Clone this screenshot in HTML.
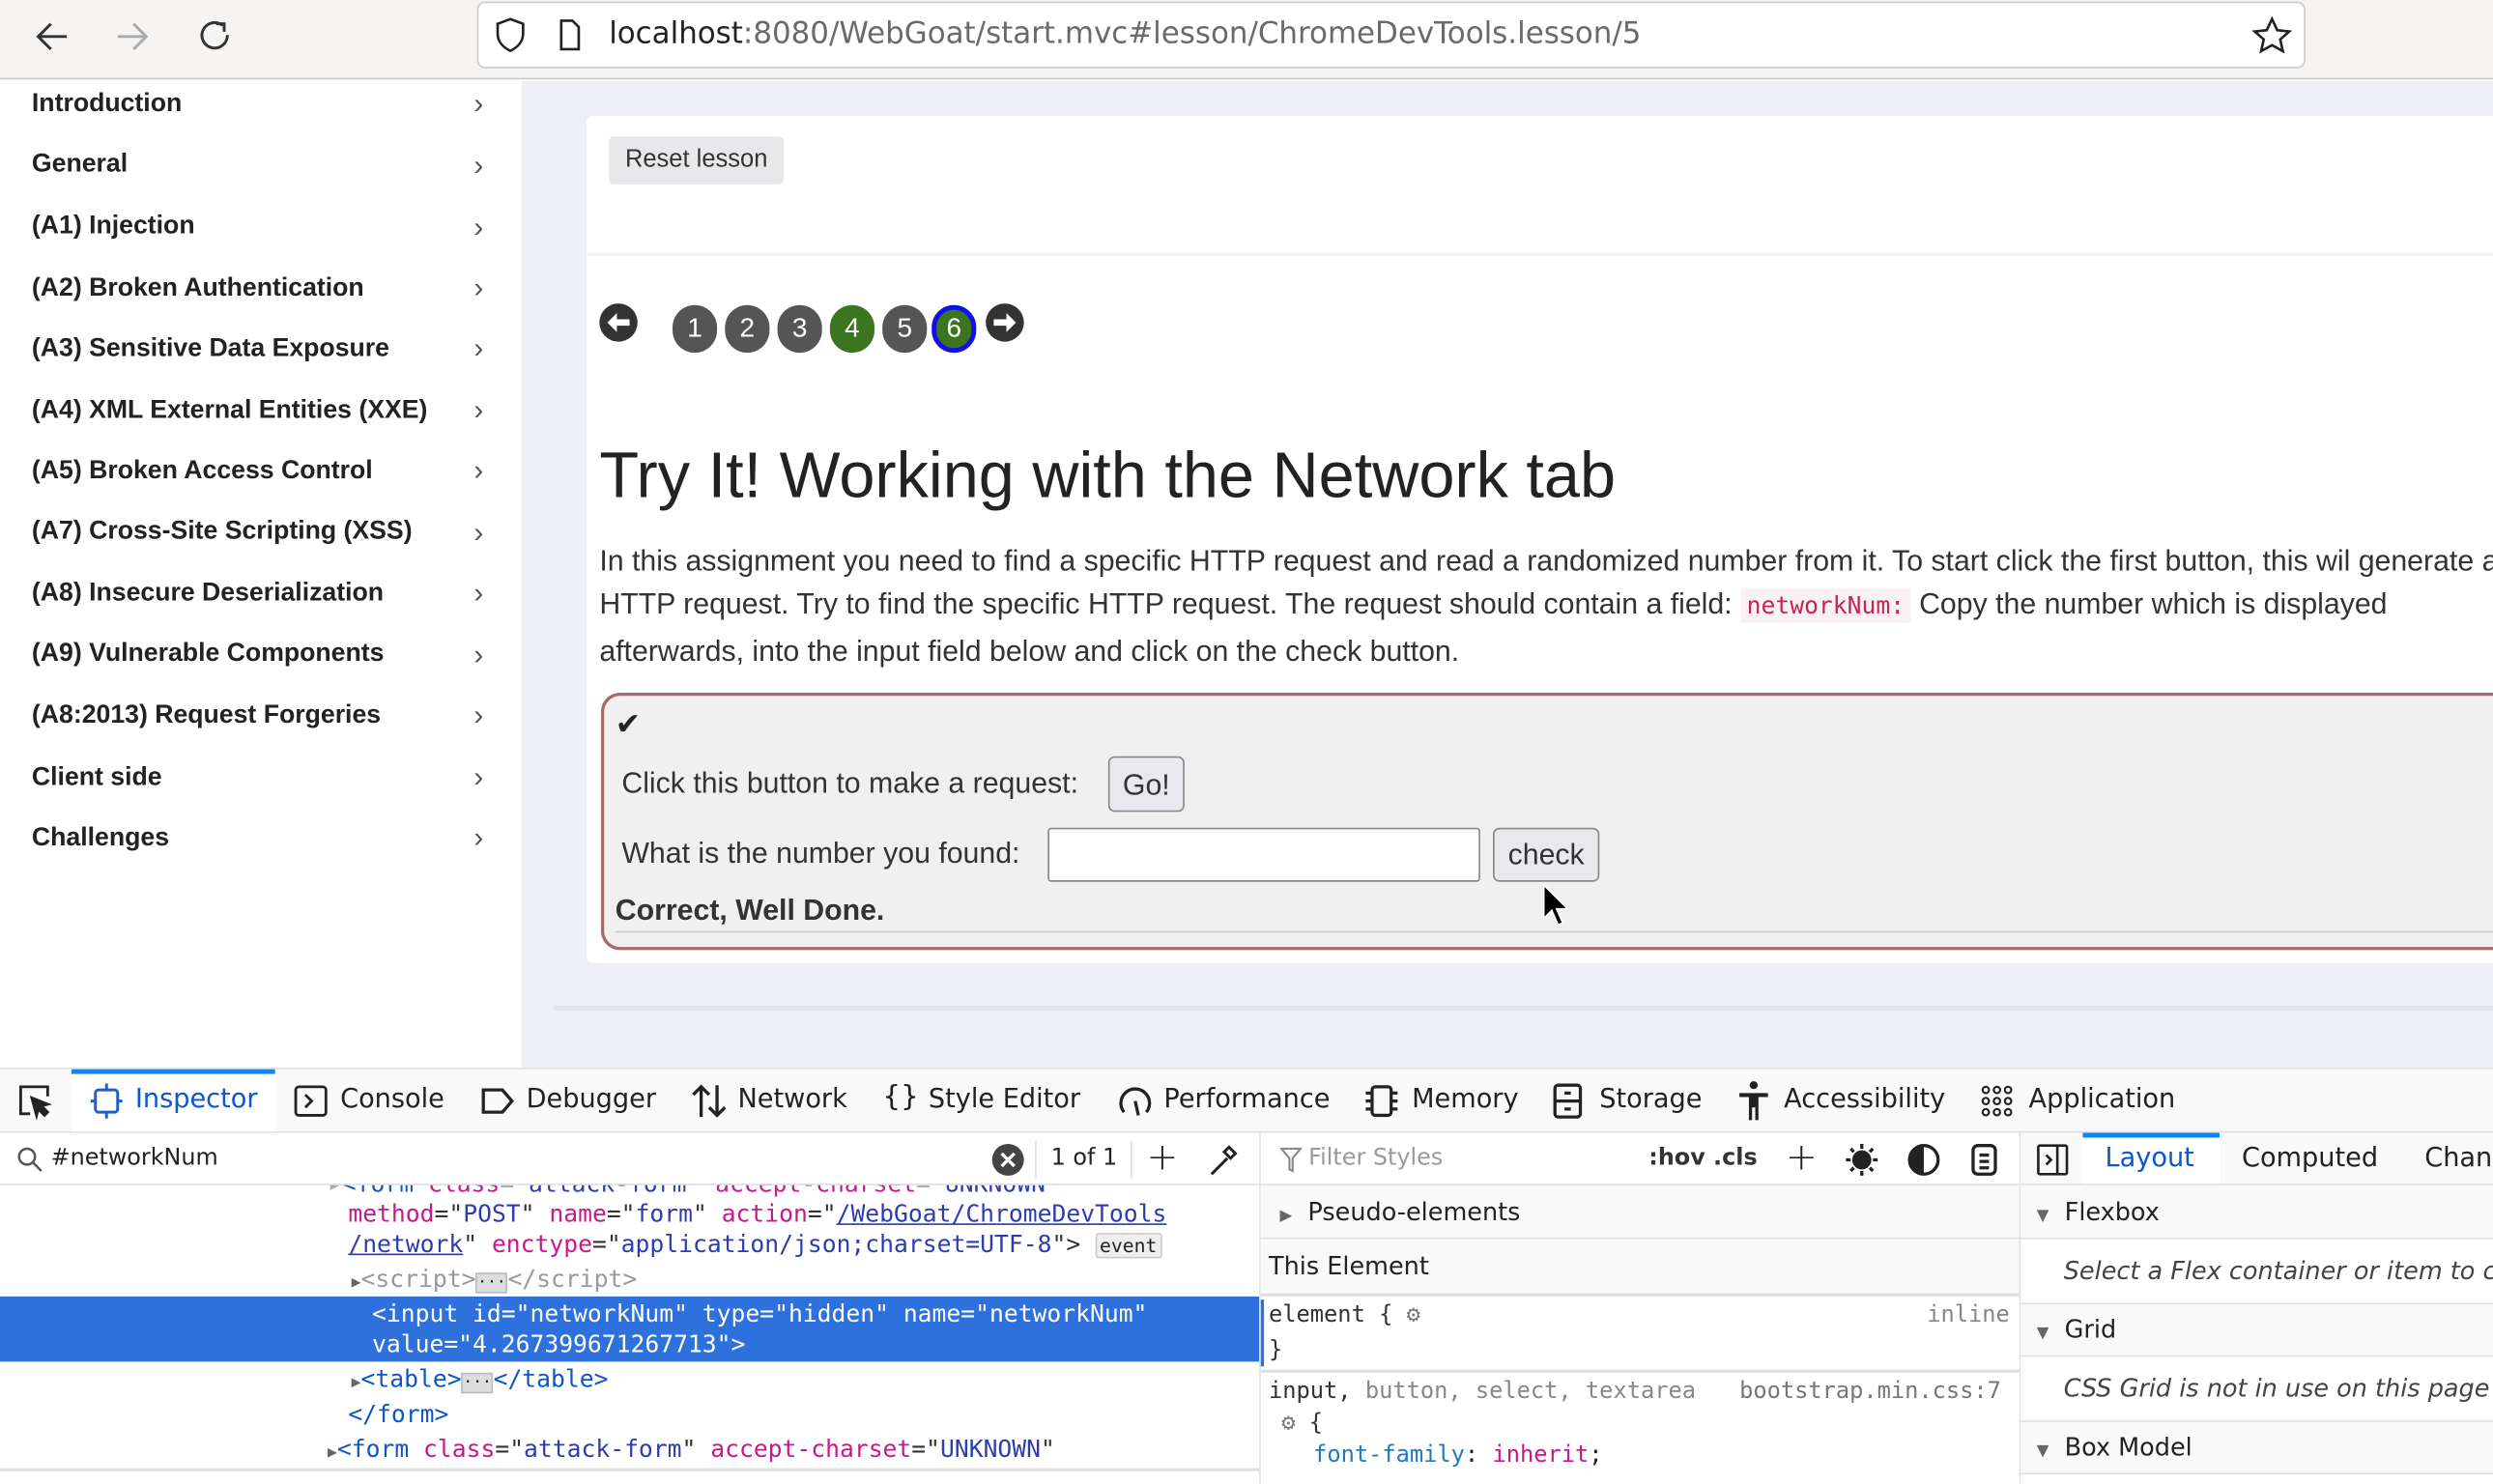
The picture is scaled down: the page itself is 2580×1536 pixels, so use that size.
<!DOCTYPE html>
<html><head><meta charset="utf-8"><style>
*{box-sizing:border-box;margin:0;padding:0}
html,body{width:2580px;height:1536px;overflow:hidden;background:#fff}
#s{position:absolute;left:0;top:0;width:1568px;height:934px;transform:scale(1.6454,1.6445);transform-origin:0 0;font-family:"Liberation Sans",sans-serif;color:#222;overflow:hidden}
.a{position:absolute;white-space:nowrap}
.m{font-family:"DejaVu Sans Mono","Liberation Mono",monospace;font-size:15px}
.ms{font-family:"DejaVu Sans Mono","Liberation Mono",monospace;font-size:14.4px}
.d{font-family:"DejaVu Sans","Liberation Sans",sans-serif}
.side div.it{position:absolute;left:20px;font-weight:bold;font-size:16.2px;color:#222}
.side span.ch{position:absolute;left:298px;font-size:18px;color:#555}
.pg{position:absolute;top:192px;width:28px;height:30px;border-radius:14px;background:#555;color:#fff;font-size:17px;text-align:center;line-height:30px}
.tab{position:absolute;top:682px;font-size:16.5px;color:#222}
.tg{color:#0e56c6}.at{color:#c8188f}.vl{color:#2f3cb0}.gr{color:#888}
</style></head><body><div id="s">
<div class="a" style="left:0;top:0;width:1568px;height:50px;background:#f5f4f2;border-bottom:1px solid #cfccc8"></div>
<svg class="a" style="left:20px;top:10px" width="130" height="26" viewBox="0 0 130 26" fill="none" stroke="#333" stroke-width="1.8"><path d="M22 13H5M12 5l-8 8 8 8"/><path d="M54 13h17M64 5l8 8-8 8" stroke="#aaa"/><path d="M120 6a8 8 0 1 0 3 6" /><path d="M116 5h5v5"/></svg>
<div class="a" style="left:300px;top:1px;width:1150px;height:42px;background:#fff;border:1.5px solid #cdcac6;border-radius:5px"></div>
<svg class="a" style="left:310px;top:10px" width="60" height="24" viewBox="0 0 60 24" fill="none" stroke="#222" stroke-width="1.6"><path d="M11 2l8 3v6c0 6-4 9-8 11-4-2-8-5-8-11V5z"/><path d="M43 3h7l4 4v14H43z"/></svg>
<div class="a d" style="left:383px;top:11px;font-size:18.8px;color:#222">localhost<span style="color:#6a6a6a">:8080/WebGoat/start.mvc#lesson/ChromeDevTools.lesson/5</span></div>
<svg class="a" style="left:1416px;top:10px" width="26" height="26" viewBox="0 0 26 26" fill="none" stroke="#222" stroke-width="1.6"><path d="M13 2l3.3 7 7.5.8-5.6 5 1.6 7.4L13 18.4l-6.8 3.8 1.6-7.4-5.6-5L9.7 9z"/></svg>
<div class="a side" style="left:0;top:51px;width:328px;height:621px;background:#fff">
<div class="it" style="top:5px">Introduction</div><span class="ch" style="top:4px">›</span>
<div class="it" style="top:43px">General</div><span class="ch" style="top:43px">›</span>
<div class="it" style="top:82px">(A1) Injection</div><span class="ch" style="top:82px">›</span>
<div class="it" style="top:121px">(A2) Broken Authentication</div><span class="ch" style="top:120px">›</span>
<div class="it" style="top:159px">(A3) Sensitive Data Exposure</div><span class="ch" style="top:158px">›</span>
<div class="it" style="top:198px">(A4) XML External Entities (XXE)</div><span class="ch" style="top:197px">›</span>
<div class="it" style="top:236px">(A5) Broken Access Control</div><span class="ch" style="top:235px">›</span>
<div class="it" style="top:274px">(A7) Cross-Site Scripting (XSS)</div><span class="ch" style="top:274px">›</span>
<div class="it" style="top:313px">(A8) Insecure Deserialization</div><span class="ch" style="top:312px">›</span>
<div class="it" style="top:351px">(A9) Vulnerable Components</div><span class="ch" style="top:351px">›</span>
<div class="it" style="top:390px">(A8:2013) Request Forgeries</div><span class="ch" style="top:389px">›</span>
<div class="it" style="top:429px">Client side</div><span class="ch" style="top:428px">›</span>
<div class="it" style="top:467px">Challenges</div><span class="ch" style="top:466px">›</span>
</div>
<div class="a" style="left:328px;top:51px;width:1240px;height:621px;background:#eff0f5"></div>
<div class="a" style="left:369px;top:73px;width:1210px;height:533px;background:#fff;border-radius:4px"></div>
<div class="a" style="left:383px;top:86px;width:110px;height:30px;background:#e8e8eb;border-radius:3px;font-size:15.5px;color:#333;line-height:30px;text-align:center">Reset lesson</div>
<div class="a" style="left:369px;top:159px;width:1200px;height:2px;background:#f2f2f2"></div>
<svg class="a" style="left:376px;top:190px" width="28" height="28" viewBox="0 0 28 28"><circle cx="13" cy="13" r="12" fill="#333"/><path d="M6 13l6-6v4h8v4h-8v4z" fill="#fff"/></svg>
<div class="pg" style="left:423px">1</div><div class="pg" style="left:456px">2</div><div class="pg" style="left:489px">3</div>
<div class="pg" style="left:522px;background:#3b7520">4</div><div class="pg" style="left:555px">5</div>
<div class="pg" style="left:586px;background:#3b7520;border:3px solid #1010e8;line-height:24px">6</div>
<svg class="a" style="left:619px;top:190px" width="28" height="28" viewBox="0 0 28 28"><circle cx="13" cy="13" r="12" fill="#333"/><path d="M20 13l-6-6v4H6v4h8v4z" fill="#fff"/></svg>
<div class="a" style="left:377px;top:276px;font-size:40.5px;color:#222">Try It! Working with the Network tab</div>
<div class="a" style="left:377px;top:339px;font-size:18.4px;color:#333;line-height:27.3px">In this assignment you need to find a specific HTTP request and read a randomized number from it. To start click the first button, this wil generate an<br>HTTP request. Try to find the specific HTTP request. The request should contain a field: <span class="m" style="color:#c7254e;background:#f9f2f4;padding:2px 4px;font-size:15px">networkNum:</span> Copy the number which is displayed<br>afterwards, into the input field below and click on the check button.</div>
<div class="a" style="left:378px;top:436px;width:1230px;height:162px;background:#f0f0f0;border:2px solid #a86b6b;border-radius:12px"></div>
<div class="a" style="left:387px;top:445px;font-size:19px">✔</div>
<div class="a" style="left:391px;top:482px;font-size:18.4px;color:#333">Click this button to make a request:</div>
<div class="a" style="left:697px;top:476px;width:48px;height:35px;border:1px solid #888;border-radius:4px;background:#e9e9ed;font-size:18.4px;text-align:center;line-height:33px;color:#333">Go!</div>
<div class="a" style="left:391px;top:526px;font-size:18.4px;color:#333">What is the number you found:</div>
<div class="a" style="left:659px;top:521px;width:272px;height:34px;border:1px solid #888;border-radius:2px;background:#fff"></div>
<div class="a" style="left:939px;top:521px;width:67px;height:34px;border:1px solid #888;border-radius:4px;background:#e9e9ed;font-size:18.4px;text-align:center;line-height:32px;color:#333">check</div>
<svg class="a" style="left:969px;top:556px" width="20" height="28" viewBox="0 0 20 28"><path d="M2 1v21l5-5 4 9 3-1-4-9h7z" fill="#000" stroke="#fff" stroke-width="1"/></svg>
<div class="a" style="left:387px;top:562px;font-size:18.4px;font-weight:bold;color:#333">Correct, Well Done.</div>
<div class="a" style="left:387px;top:586px;width:1200px;height:1px;background:#ccc"></div>
<div class="a" style="left:348px;top:633px;width:1220px;height:3px;background:#e3e4e8"></div>
<div class="a" style="left:0;top:672px;width:1568px;height:41px;background:#f9f9fa;border-top:1px solid #e0e0e2;border-bottom:1px solid #e0e0e2"></div>
<div class="a" style="left:45px;top:673px;width:128px;height:3px;background:#0a84ff"></div>
<div class="a" style="left:45px;top:676px;width:128px;height:36px;background:#fff"></div>
<svg class="a" style="left:10px;top:681px" width="24" height="24" viewBox="0 0 24 24" fill="none" stroke="#222" stroke-width="1.7"><path d="M9 20H3V3h17v6"/><path d="M10 10l10 4-4 1 4 4-2 2-4-4-1 4z" fill="#222"/></svg>
<svg class="a" style="left:56px;top:681px" width="22" height="24" viewBox="0 0 22 24" fill="none" stroke="#1f5fc9" stroke-width="1.8"><rect x="4" y="5" width="14" height="14" rx="2"/><path d="M11 1v4M11 19v4M1 12h3M18 12h3"/></svg>
<div class="tab d" style="left:85px;color:#0b57d0">Inspector</div>
<svg class="a" style="left:185px;top:683px" width="22" height="20" viewBox="0 0 22 20" fill="none" stroke="#222" stroke-width="1.7"><rect x="1" y="1" width="19" height="18" rx="2"/><path d="M7 6l4 4-4 4"/></svg>
<div class="tab d" style="left:214px">Console</div>
<svg class="a" style="left:302px;top:683px" width="22" height="20" viewBox="0 0 22 20" fill="none" stroke="#222" stroke-width="2"><path d="M2 3h12l6 7-6 7H2z"/></svg>
<div class="tab d" style="left:331px">Debugger</div>
<svg class="a" style="left:434px;top:681px" width="24" height="24" viewBox="0 0 24 24" fill="none" stroke="#222" stroke-width="2"><path d="M7 22V3M2 8l5-5 5 5M17 2v19M12 16l5 5 5-5"/></svg>
<div class="tab d" style="left:464px">Network</div>
<div class="tab d" style="left:555px;top:680px;font-size:18px">{}</div>
<div class="tab d" style="left:584px">Style Editor</div>
<svg class="a" style="left:702px;top:681px" width="24" height="24" viewBox="0 0 24 24" fill="none" stroke="#222" stroke-width="2"><path d="M5 19A9 9 0 1 1 19 19M12 12l2 9"/></svg>
<div class="tab d" style="left:732px">Performance</div>
<svg class="a" style="left:858px;top:681px" width="22" height="24" viewBox="0 0 22 24" fill="none" stroke="#222" stroke-width="2"><rect x="5" y="3" width="12" height="18" rx="2"/><path d="M1 7h4M1 12h4M1 17h4M17 7h4M17 12h4M17 17h4"/></svg>
<div class="tab d" style="left:888px">Memory</div>
<svg class="a" style="left:976px;top:681px" width="20" height="24" viewBox="0 0 20 24" fill="none" stroke="#222" stroke-width="2"><rect x="2" y="2" width="16" height="20" rx="2"/><path d="M2 12h16M8 7h4M8 17h4"/></svg>
<div class="tab d" style="left:1006px">Storage</div>
<svg class="a" style="left:1092px;top:680px" width="22" height="26" viewBox="0 0 22 26" fill="#222"><circle cx="11" cy="3" r="2.5"/><path d="M2 8h18v2.5h-6V25h-2v-8h-2v8H8V10.5H2z"/></svg>
<div class="tab d" style="left:1122px">Accessibility</div>
<svg class="a" style="left:1246px;top:683px" width="20" height="20" viewBox="0 0 20 20" fill="none" stroke="#222" stroke-width="1.3"><circle cx="3" cy="3" r="2"/><circle cx="10" cy="3" r="2"/><circle cx="17" cy="3" r="2"/><circle cx="3" cy="10" r="2"/><circle cx="10" cy="10" r="2"/><circle cx="17" cy="10" r="2"/><circle cx="3" cy="17" r="2"/><circle cx="10" cy="17" r="2"/><circle cx="17" cy="17" r="2"/></svg>
<div class="tab d" style="left:1276px">Application</div>
<div class="a" style="left:0;top:713px;width:792px;height:221px;background:#fff"></div>
<div class="a" style="left:0;top:745px;width:792px;height:1px;background:#e0e0e2"></div>
<svg class="a" style="left:10px;top:721px" width="18" height="18" viewBox="0 0 18 18" fill="none" stroke="#555" stroke-width="1.5"><circle cx="7" cy="7" r="5"/><path d="M11 11l5 5"/></svg>
<div class="a d" style="left:32px;top:721px;font-size:14.5px">#networkNum</div>
<svg class="a" style="left:623px;top:719px" width="22" height="22" viewBox="0 0 22 22"><circle cx="11" cy="11" r="10" fill="#444"/><path d="M7 7l8 8M15 7l-8 8" stroke="#fff" stroke-width="2"/></svg>
<div class="a" style="left:651px;top:718px;width:1px;height:24px;background:#ddd"></div>
<div class="a d" style="left:661px;top:721px;font-size:14.5px">1 of 1</div>
<div class="a" style="left:711px;top:718px;width:1px;height:24px;background:#ddd"></div>
<div class="a d" style="left:721px;top:714px;font-size:24px;font-weight:300">+</div>
<svg class="a" style="left:760px;top:719px" width="20" height="22" viewBox="0 0 20 22" fill="none" stroke="#222" stroke-width="1.8"><path d="M2 20l10-10M10 6l4 4M13 3l4 4-3 3-4-4z"/></svg>
<div class="a m" style="left:206px;top:736px;color:#aaa;clip-path:inset(10px 0 0 0)">▸<span class="tg">&lt;form</span> <span class="at">class</span>="<span class="vl">attack-form</span>" <span class="at">accept-charset</span>="<span class="vl">UNKNOWN</span>"</div>
<div class="a m" style="left:219px;top:755px;color:#333"><span class="at">method</span>="<span class="vl">POST</span>" <span class="at">name</span>="<span class="vl">form</span>" <span class="at">action</span>="<span class="vl" style="text-decoration:underline">/WebGoat/ChromeDevTools</span></div>
<div class="a m" style="left:219px;top:774px;color:#333"><span class="vl" style="text-decoration:underline">/network</span>" <span class="at">enctype</span>="<span class="vl">application/json;charset=UTF-8</span>"&gt; <span style="font-size:12px;background:#eee;border:1px solid #ccc;border-radius:2px;padding:0 2px;color:#222">event</span></div>
<div class="a m" style="left:221px;top:796px;color:#999"><span style="font-size:10px;color:#666">▶</span>&lt;script&gt;<span style="font-size:10px;background:#ddd;border:1px solid #bbb;color:#222">···</span>&lt;/script&gt;</div>
<div class="a" style="left:0;top:816px;width:792px;height:41px;background:#2f71dc"></div>
<div class="a m" style="left:234px;top:818px;color:#fff;line-height:19px">&lt;input id="networkNum" type="hidden" name="networkNum"<br>value="4.267399671267713"&gt;</div>
<div class="a m" style="left:221px;top:859px;color:#333"><span style="font-size:10px;color:#666">▶</span><span class="tg">&lt;table&gt;</span><span style="font-size:10px;background:#ddd;border:1px solid #bbb;color:#222">···</span><span class="tg">&lt;/table&gt;</span></div>
<div class="a m" style="left:219px;top:881px"><span class="tg">&lt;/form&gt;</span></div>
<div class="a m" style="left:206px;top:903px;color:#333"><span style="font-size:10px;color:#666">▶</span><span class="tg">&lt;form</span> <span class="at">class</span>="<span class="vl">attack-form</span>" <span class="at">accept-charset</span>="<span class="vl">UNKNOWN</span>"</div>
<div class="a" style="left:0;top:924px;width:792px;height:2px;background:#e0e0e2"></div>
<div class="a" style="left:792px;top:713px;width:1px;height:221px;background:#e0e0e2"></div>
<div class="a" style="left:793px;top:713px;width:477px;height:221px;background:#fff"></div>
<svg class="a" style="left:805px;top:722px" width="14" height="16" viewBox="0 0 14 16" fill="none" stroke="#888" stroke-width="1.3"><path d="M1 1h12L8 7v8l-2-1V7z"/></svg>
<div class="a d" style="left:823px;top:721px;font-size:14.5px;color:#999">Filter Styles</div>
<div class="a d" style="left:1037px;top:721px;font-size:14.5px;font-weight:bold;color:#333">:hov .cls</div>
<div class="a d" style="left:1123px;top:714px;font-size:24px;font-weight:300">+</div>
<svg class="a" style="left:1160px;top:719px" width="22" height="22" viewBox="0 0 22 22" stroke="#222" stroke-width="2"><circle cx="11" cy="11" r="5" fill="#222"/><path d="M11 1v3M11 18v3M1 11h3M18 11h3M4 4l2 2M16 16l2 2M4 18l2-2M16 6l2-2"/></svg>
<svg class="a" style="left:1199px;top:719px" width="22" height="22" viewBox="0 0 22 22"><circle cx="11" cy="11" r="9" fill="none" stroke="#222" stroke-width="2"/><path d="M11 2a9 9 0 0 0 0 18z" fill="#222"/></svg>
<svg class="a" style="left:1239px;top:719px" width="18" height="22" viewBox="0 0 18 22" fill="none" stroke="#222" stroke-width="2"><rect x="2" y="2" width="14" height="18" rx="3"/><path d="M6 8h6M6 12h6M6 16h6"/></svg>
<div class="a" style="left:793px;top:745px;width:477px;height:35px;background:#f9f9fa;border-top:1px solid #e0e0e2;border-bottom:1px solid #e0e0e2"></div>
<div class="a d" style="left:805px;top:754px;font-size:15.5px;color:#222"><span style="font-size:10px;color:#666">▶</span>&nbsp; Pseudo-elements</div>
<div class="a" style="left:793px;top:781px;width:477px;height:35px;background:#f9f9fa;border-bottom:2px solid #e0e0e2"></div>
<div class="a d" style="left:798px;top:788px;font-size:15.5px;color:#222">This Element</div>
<div class="a" style="left:793px;top:818px;width:2px;height:42px;background:#2f71dc"></div>
<div class="a ms" style="left:798px;top:820px;color:#333">element { <span style="color:#777">⚙</span></div>
<div class="a ms" style="left:1212px;top:820px;color:#888">inline</div>
<div class="a ms" style="left:798px;top:842px;color:#333">}</div>
<div class="a" style="left:793px;top:862px;width:477px;height:2px;background:#e0e0e2"></div>
<div class="a ms" style="left:798px;top:868px;color:#333">input, <span class="gr">button, select, textarea</span></div>
<div class="a ms" style="left:1094px;top:868px;color:#777">bootstrap.min.css:7</div>
<div class="a ms" style="left:806px;top:888px;color:#333"><span style="color:#777">⚙</span> {</div>
<div class="a ms" style="left:826px;top:908px"><span style="color:#1f7ac6">font-family</span>: <span class="at">inherit</span>;</div>
<div class="a" style="left:1270px;top:713px;width:1px;height:221px;background:#e0e0e2"></div>
<div class="a" style="left:1271px;top:713px;width:297px;height:221px;background:#fff"></div>
<div class="a" style="left:1271px;top:713px;width:297px;height:33px;background:#f9f9fa;border-bottom:1px solid #e0e0e2"></div>
<div class="a" style="left:1310px;top:713px;width:86px;height:3px;background:#0a84ff"></div>
<div class="a" style="left:1310px;top:716px;width:86px;height:29px;background:#fff"></div>
<svg class="a" style="left:1281px;top:720px" width="20" height="20" viewBox="0 0 20 20" fill="none" stroke="#222" stroke-width="1.6"><rect x="1" y="1" width="18" height="18" rx="1"/><path d="M13 1v18M6 7l3 3-3 3" /></svg>
<div class="a d" style="left:1324px;top:719px;font-size:16.5px;color:#0b57d0">Layout</div>
<div class="a d" style="left:1410px;top:719px;font-size:16.5px">Computed</div>
<div class="a d" style="left:1525px;top:719px;font-size:16.5px">Changes</div>
<div class="a" style="left:1271px;top:746px;width:297px;height:34px;background:#f9f9fa;border-bottom:1px solid #e0e0e2"></div>
<div class="a d" style="left:1281px;top:754px;font-size:15.5px"><span style="font-size:10px;color:#666">▼</span>&nbsp; Flexbox</div>
<div class="a d" style="left:1298px;top:791px;font-size:15.5px;font-style:italic;color:#444">Select a Flex container or item to continue.</div>
<div class="a" style="left:1271px;top:820px;width:297px;height:34px;background:#f9f9fa;border-top:1px solid #e0e0e2;border-bottom:1px solid #e0e0e2"></div>
<div class="a d" style="left:1281px;top:828px;font-size:15.5px"><span style="font-size:10px;color:#666">▼</span>&nbsp; Grid</div>
<div class="a d" style="left:1298px;top:865px;font-size:15.5px;font-style:italic;color:#444">CSS Grid is not in use on this page</div>
<div class="a" style="left:1271px;top:894px;width:297px;height:34px;background:#f9f9fa;border-top:1px solid #e0e0e2;border-bottom:1px solid #e0e0e2"></div>
<div class="a d" style="left:1281px;top:902px;font-size:15.5px"><span style="font-size:10px;color:#666">▼</span>&nbsp; Box Model</div>
</div></body></html>
